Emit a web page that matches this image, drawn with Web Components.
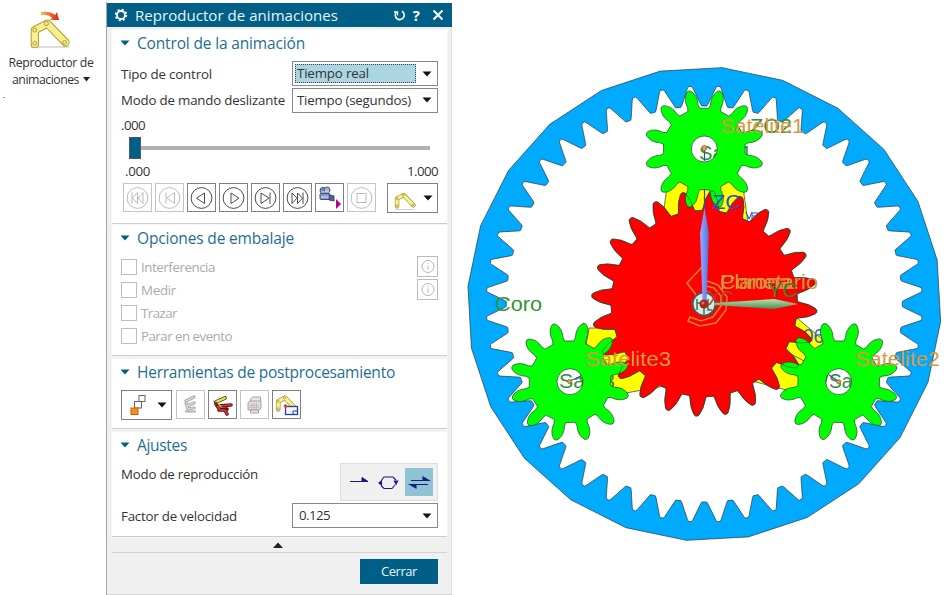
<!DOCTYPE html>
<html lang="es"><head><meta charset="utf-8"><title>Reproductor de animaciones</title>
<style>body{margin:0;background:#fff;font:13.3px/16px "Open Sans","Noto Sans",sans-serif;color:#333;overflow:hidden}</style></head>
<body><app-shell></app-shell>
<script>
const define=(name,html,after)=>customElements.define(name,class extends HTMLElement{
  constructor(){super();this.attachShadow({mode:'open'}).innerHTML=html}
  connectedCallback(){if(after)after(this,this.shadowRoot)}
});

/* Text run spaced to a given width */
define('fit-text','<style>:host{display:inline-block;white-space:nowrap}</style><span><slot></slot></span>',(h,r)=>{
  const s=r.querySelector('span'),n=h.textContent.length;
  s.style.letterSpacing=((+h.getAttribute('w')-s.getBoundingClientRect().width)/n)+'px';
});

/* Icons */
const circ='<circle cx="13.500" cy="14" r="10.4"/>';
const link=(t,s='#a99a2c')=>`<g transform="${t}"><path d="M5 29V14L18 7L37 27" fill="none" stroke="${s}" stroke-width="8.6" stroke-linecap="round" stroke-linejoin="round"/><path d="M5 29V14L18 7L37 27" fill="none" stroke="#f8ef91" stroke-width="6.6" stroke-linecap="round" stroke-linejoin="round"/><g fill="#f6eb83" stroke="${s}"><circle cx="5" cy="28" r="2"/><circle cx="5" cy="14" r="2"/><circle cx="17" cy="7" r="2.2"/><circle cx="36" cy="27" r="2"/></g></g>`;
const icons={
 first:[28,28,`<g fill="none" stroke="currentColor">${circ}<path d="M8 8.500v11M13.500 8.500l-5 5.500 5 5.500zM19 8.500l-5 5.500 5 5.500z"/></g>`],
 prev:[28,28,`<g fill="none" stroke="currentColor">${circ}<path d="M10 8.500v11M18.500 8.500l-7.500 5.500 7.500 5.500z"/></g>`],
 back:[28,28,`<g fill="none" stroke="currentColor">${circ}<path d="M16.500 9v10.500l-8-5.300z"/></g>`],
 play:[28,28,`<g fill="none" stroke="currentColor">${circ}<path d="M11 9v10.500l8-5.300z"/></g>`],
 next:[28,28,`<g fill="none" stroke="currentColor">${circ}<path d="M9 9v10.500l8-5.300zM18 8.500v11.500"/></g>`],
 last:[28,28,`<g fill="none" stroke="currentColor">${circ}<path d="M8 9v10.500l5-5.300zM13.500 9v10.500l5-5.300zM19 8.500v11.500"/></g>`],
 stop:[28,28,`<g fill="none" stroke="currentColor">${circ}<rect x="9" y="9.5" width="9" height="9"/></g>`],
 camera:[28,28,`<g stroke="#34406f" stroke-width=".9"><circle cx="7" cy="6.500" r="3" fill="#7d8cb5"/><circle cx="11" cy="6" r="3" fill="#aab5d3"/><rect x="4" y="9.500" width="10" height="6" rx="1" fill="#8798c4"/><path d="M13 11l5 1v5l-5-1z" fill="#49629f"/></g><path d="M5 8h8M5 13h8" stroke="#dce5fa"/><path d="M20 15v10l5-5z" fill="#b0009c"/>`],
 linkSmall:[22,18,link('translate(.5 -.5) scale(.51)','#8b7b19')+'<path d="M1 17.5h19" stroke="#bbb" stroke-width=".7"/>'],
 info:[20,20,`<circle cx="10" cy="9.5" r="6" fill="none" stroke="#b6b6b6"/><path d="M10 8.500v4.500M10 6v1.200" stroke="#b6b6b6"/>`],
 steps:[20,22,`<rect x="9" y="1.500" width="6" height="6" fill="#fff" stroke="#666"/><rect x="4.500" y="7.500" width="7" height="6.500" fill="#fff" stroke="#666"/><rect x="1" y="14" width="7" height="6.5" fill="#ff8c19" stroke="#b9650c"/>`],
 robotGray:[28,28,`<g fill="none" stroke-linecap="round" stroke-linejoin="round"><path d="M9 10l8-4M9 12l2 6M10 15l7-3M11 18l6-1" stroke="#a3a3a3" stroke-width="3.200"/><path d="M9 10l8-4M9 12l2 6M10 15l7-3M11 18l6-1" stroke="#dad6d4" stroke-width="1.400"/></g><path d="M8 20.500h11" stroke="#b4b0ae" stroke-width="2"/>`],
 robot:[28,28,`<g fill="none" stroke-linecap="round" stroke-linejoin="round"><path d="M7 11l9-4" stroke="#514a12" stroke-width="3.800"/><path d="M7 11l9-4" stroke="#eee25a" stroke-width="2"/><path d="M7 13l4 6h5l2 4M10 15l12-1M10 19l8-1" stroke="#5d1010" stroke-width="3.600"/><path d="M7 13l4 6h5l2 4M10 15l12-1" stroke="#d83a35" stroke-width="1.700"/><path d="M5 10l3 4M7 14.500l5-1" stroke="#333"/><path d="M9 12l3 4" stroke="#eee25a" stroke-width="1.200"/></g>`],
 cubeGray:[28,28,`<g fill="#e4e4ea" stroke="#a4a4ae"><path d="M9.500 8l2-2h8v7l-2 2h-8z"/><path d="M7 12l2-2h11v7l-2 2H7z" fill="#e3dcd6"/><path d="M9.500 19h8v3h-8z"/><path d="M8 14.500h10M8 16.500h10M10.500 12v7M13 12v7M15.500 12v7" stroke="#c0b2a6" stroke-width=".7"/></g>`],
 linkBox:[28,28,link('translate(2.500 3) scale(.53)','#8b7b19')+`<rect x="12.5" y="15.5" width="12" height="8" fill="#f4f6ff" stroke="#2b3e9c" stroke-width="1.3"/><path d="M20 23v-3h4" fill="none" stroke="#2b3e9c"/><circle cx="12.500" cy="15" r="1.8" fill="#e2402b"/>`],
 once:[28,28,`<path d="M5 13.500h18l-6-4v4" fill="#1717a0" stroke="#1b1b78" stroke-width="1"/>`],
 loop:[28,28,`<path d="M6 13l3-4h9l3 3M20 17l-3 3.500H9l-3-3" fill="none" stroke="#1b1b78" stroke-width="1.100"/><path d="M18.500 12.500h5l-2.500 5zM3 15l4-3v6z" fill="#1515b0"/>`],
 both:[28,28,`<path d="M6 12.500h18l-6-3.500v3.500M23 16.500H5l6 3.500v-3.500" fill="#1515a0" stroke="#1b1b78" stroke-width="1.1"/>`],
 gear:[16,16,`<circle cx="8" cy="8" r="4" fill="none" stroke="#fff" stroke-width="1.8"/><circle cx="8" cy="8" r="5.400" fill="none" stroke="#fff" stroke-width="1.700" stroke-dasharray="2.120 2.120"/>`],
 reset:[14,14,`<path d="M3.500 4a4.500 4.500 0 1 0 5.500-.800" fill="none" stroke="#fff" stroke-width="1.600"/><path d="M1 4h3.500v3.500" fill="none" stroke="#fff" stroke-width="1.300"/>`],
 close:[12,12,`<path d="M1.500 1.500l9 9M10.500 1.500l-9 9" stroke="#fff" stroke-width="2"/>`],
 down:[10,6,`<path d="M.5.5h9L5 5.500z" fill="currentColor"/>`],
 up:[10,6,`<path d="M0 6h10L5 .5z" fill="#222"/>`]
};
define('ui-icon','<style>:host{display:inline-block;flex:none;line-height:0}svg{display:block}</style><div></div>',(h,r)=>{
  const [w,t,b]=icons[h.getAttribute('name')];
  r.querySelector('div').innerHTML=`<svg width="${w}" height="${t}" viewBox="0 0 ${w} ${t}">${b}</svg>`;
});
define('tool-button',`<style>:host{display:flex;box-sizing:border-box;width:29px;height:29px;border:1px solid #808080;align-items:center;justify-content:center;color:#4a4a4a;background:#fff;flex:none}:host([off]){border-color:#c4c4c4;color:#bbb}:host([wide]){width:51px;height:30px;justify-content:space-between;padding:0 4px 0 6px;color:#111}:host([info]){width:21px;height:21px;border-color:#bbb}</style><slot></slot>`);
define('combo-box',`<style>:host{display:flex;box-sizing:border-box;width:146px;height:25px;border:1px solid #888;align-items:center;background:#fff;color:#333;padding:0 5px 0 2px;justify-content:space-between}.v{height:19px;box-sizing:border-box;width:121px;border:1px solid transparent;padding-left:1px;line-height:16px}:host([active]) .v{background:#abd5e0;border:1px dotted #345}ui-icon{color:#111}</style><div class="v"><slot></slot></div><ui-icon name="down"></ui-icon>`);
define('panel-section',`<style>:host{display:block;background:#fff;box-sizing:border-box;padding:0 9px 0 9px;border-bottom:1px solid #ccc;box-shadow:0 0 0 .5px #f8f8f8}header{display:flex;align-items:center;gap:7px;height:26px;color:#1d6f91;font-size:15.500px;line-height:20px;margin:0 0 1px -1px}ui-icon{color:#005f87}</style><header><ui-icon name="down"></ui-icon><slot name="title"></slot></header><slot></slot>`);
define('check-row',`<style>:host{display:flex;align-items:center;height:23.200px;color:#aaa;gap:4px}i{width:16px;height:16px;box-sizing:border-box;border:1px solid #bdbdbd}tool-button{margin-left:auto;display:none}:host([info]) tool-button{display:flex}</style><i></i><slot></slot><tool-button info><ui-icon name="info"></ui-icon></tool-button>`);
define('form-row',`<style>:host{display:flex;justify-content:space-between;align-items:center}</style><slot></slot>`);
define('time-slider',`<style>:host{display:block;height:22px;margin:0 8px}div{display:flex;align-items:center;height:22px}b{width:12px;height:22px;background:#005f87;border:1px solid #557;box-sizing:border-box}i{height:4px;flex:1;background:#b0b0b0}</style><div><b></b><i></i></div>`);
define('launch-item',`<style>:host{display:flex;flex-direction:column;align-items:center;width:102px;padding-top:10px;height:585px;font-size:12.300px;line-height:17px}.p{height:43.500px}.p svg{margin-left:-2px}.t{display:flex;align-items:center;gap:4px}.d{align-self:flex-start;width:2px;height:1px;background:#6ab;margin:9px 0 0 3px}</style>
<div class="p"><svg width="44" height="42" viewBox="0 0 44 42"><defs><linearGradient id="g"><stop stop-color="#f9b44e"/><stop offset="1" stop-color="#e1240e"/></linearGradient></defs><path d="M3 37h38" stroke="#bbb"/>${link('translate(2 7) scale(.96 .94)')}<path d="M13 2q9-1 14 3l2-3 2 8-9 0 2-2q-4-4-11-3z" fill="url(#g)"/></svg></div>
<fit-text w="85">Reproductor de</fit-text><div class="t"><fit-text w="67">animaciones</fit-text><svg width="7" height="5"><path d="M0 0h7L3.500 4.500z" fill="#222"/></svg></div><div class="d"></div>`);

define('animation-dialog',`<style>
:host{display:flex;flex-direction:column;box-sizing:border-box;width:346px;height:595px;border-left:1px solid #a7a7a7;background:#f0f0f0;border-top:3px solid #fff;box-shadow:inset -1px 0 #e1e1e1}
.bar{height:24px;background:#005f87;color:#fff;display:flex;align-items:center;padding:0 8px 0 6px;font-size:15px;line-height:22px;margin-bottom:3px}
.bar fit-text{margin-left:6px;color:#e9f4f8}.bar .r{margin-left:auto;display:flex;align-items:center;gap:8px}.bar b{font-size:15px;margin-left:-2px}
panel-section{margin:0 5px}
.tools{display:flex;gap:3px}.modes{box-sizing:border-box;width:98px;height:38px;border:1px solid #ddd;background:#f0f0f0;display:flex;align-items:center;justify-content:flex-end;padding-right:4px;gap:2px}
.sel{background:#8dc3d3}
.fold{height:15px;display:flex;justify-content:center;align-items:center;border-bottom:1px solid #d4d4d4;margin:0 5px;padding-right:3px}
button{align-self:flex-end;margin:6px 14px 0 0;width:78px;height:25px;border:0;background:#005f87;color:#e8f4f8;font:13px/16px "Open Sans",sans-serif;padding:0 0 1px}
.end{margin-top:auto;height:1px;background:#d6d6d6}
</style>
<div class="bar"><ui-icon name="gear"></ui-icon><fit-text w="203">Reproductor de animaciones</fit-text><div class="r"><ui-icon name="reset" style="margin-right:0"></ui-icon><b>?</b><ui-icon name="close" style="margin-left:4px"></ui-icon></div></div>
<panel-section style="height:194px"><fit-text slot="title" w="168">Control de la animación</fit-text>
 <form-row style="margin-top:5px;height:25px"><fit-text w="91">Tipo de control</fit-text><combo-box active><fit-text w="72">Tiempo real</fit-text></combo-box></form-row>
 <form-row style="margin-top:1px;height:26px"><fit-text w="164">Modo de mando deslizante</fit-text><combo-box><fit-text w="114">Tiempo (segundos)</fit-text></combo-box></form-row>
 <form-row style="margin-top:3px;height:18px"><fit-text w="24">.000</fit-text></form-row>
 <time-slider style="margin-top:3px"></time-slider>
 <form-row style="margin:3px 0 0 4px;height:18px"><fit-text w="25">.000</fit-text><fit-text w="31">1.000</fit-text></form-row>
 <form-row style="margin:3px 0 0 2px;height:31px;align-items:flex-start"><div class="tools"><tool-button off><ui-icon name="first"></ui-icon></tool-button><tool-button off><ui-icon name="prev"></ui-icon></tool-button><tool-button><ui-icon name="back"></ui-icon></tool-button><tool-button><ui-icon name="play"></ui-icon></tool-button><tool-button><ui-icon name="next"></ui-icon></tool-button><tool-button><ui-icon name="last"></ui-icon></tool-button><tool-button><ui-icon name="camera"></ui-icon></tool-button><tool-button off><ui-icon name="stop"></ui-icon></tool-button></div><tool-button wide><ui-icon name="linkSmall" style="margin-top:6px"></ui-icon><ui-icon name="down"></ui-icon></tool-button></form-row>
</panel-section>
<panel-section style="height:131px;margin-top:1px"><fit-text slot="title" w="157">Opciones de embalaje</fit-text>
 <check-row info style="margin-top:4px"><fit-text w="74">Interferencia</fit-text></check-row><check-row info><fit-text w="35">Medir</fit-text></check-row><check-row><fit-text w="36">Trazar</fit-text></check-row><check-row><fit-text w="91">Parar en evento</fit-text></check-row>
</panel-section>
<panel-section style="height:70px;margin-top:3px"><fit-text slot="title" w="258">Herramientas de postprocesamiento</fit-text>
 <div class="tools" style="margin-top:5px"><tool-button wide style="margin-right:1px"><ui-icon name="steps" style="margin-left:2px"></ui-icon><ui-icon name="down"></ui-icon></tool-button><tool-button off><ui-icon name="robotGray"></ui-icon></tool-button><tool-button><ui-icon name="robot"></ui-icon></tool-button><tool-button off><ui-icon name="cubeGray"></ui-icon></tool-button><tool-button><ui-icon name="linkBox"></ui-icon></tool-button></div>
</panel-section>
<panel-section style="height:105px;margin-top:3px"><fit-text slot="title" w="50">Ajustes</fit-text>
 <form-row style="margin-top:5px;height:38px;align-items:flex-start"><fit-text w="137" style="margin-top:3px">Modo de reproducción</fit-text><div class="modes"><ui-icon name="once"></ui-icon><ui-icon name="loop"></ui-icon><ui-icon class="sel" name="both"></ui-icon></div></form-row>
 <form-row style="margin-top:2px;height:25px"><fit-text w="116">Factor de velocidad</fit-text><combo-box><fit-text w="31" style="margin-left:2px">0.125</fit-text></combo-box></form-row>
</panel-section>
<div class="fold"><ui-icon name="up"></ui-icon></div>
<button><fit-text w="36">Cerrar</fit-text></button><div class="end"></div>`);

/* Planetary gear drawing */
const pt=(r,a)=>{a*=Math.PI/180;return (r*Math.cos(a)).toFixed(2)+' '+(r*Math.sin(a)).toFixed(2)};
const ring=()=>{let d='';
  for(let i=0;i<24;i++)d+=(i?'L':'M')+pt(237,4.3+15*i);d+='Z';
  for(let i=0;i<48;i++){const a=7.5*i;d+=(i?'L':'M')+pt(199.500,a-1)+'L'+pt(198,a-.7)+'L'+pt(198,a+.7)+'L'+pt(199.500,a+1)+'L'+pt(216.300,a+3.050)+'L'+pt(218,a+3.350)+'L'+pt(218,a+4.150)+'L'+pt(216.300,a+4.450)+'L'+pt(199.500,a+6.500)}
  return d+'Z'};
const sun=()=>{let d='';
  for(let i=0;i<24;i++){const a=4+15*i;d+=(i?'L':'M')+pt(93.200,a-5.200)+'L'+pt(96,a-4.600)+'Q'+pt(105,a-3.700)+' '+pt(111.600,a-1.300)+'L'+pt(112.700,a-.6)+'L'+pt(112.700,a+.6)+'L'+pt(111.600,a+1.300)+'Q'+pt(105,a+3.700)+' '+pt(96,a+4.600)+'L'+pt(93.200,a+5.200)}
  return d+'Z'};
const sat=()=>{let d='';
  for(let i=0;i<12;i++){const a=15+30*i;d+=(i?'L':'M')+pt(41,a-8.500)+'L'+pt(44.500,a-7)+'Q'+pt(54,a-7.900)+' '+pt(59.300,a-2)+'Q'+pt(60.800,a)+' '+pt(59.300,a+2)+'Q'+pt(54,a+7.900)+' '+pt(44.500,a+7)+'L'+pt(41,a+8.500)}
  return d+'ZM13 0A13 13 0 1 0-13 0A13 13 0 1 0 13 0Z'};
const T=(x,y,w,c,s)=>`<text x="${x}" y="${y}" textLength="${w}" lengthAdjust="spacingAndGlyphs" fill="${c}">${s}</text>`;
const O='#d8983f',G='#2f9435',B='#2b50b8';
define('gear-view',`<style>:host{display:block;width:494px;height:595px}svg{display:block}text{font:20.500px "Liberation Sans",Arial,sans-serif}</style>
<svg width="494" height="595" viewBox="452 0 494 595"><g stroke="#2a3a34" stroke-width=".7">
<path transform="translate(704.300 304)" fill="#00aaff" fill-rule="evenodd" d="${ring()}"/>
<g fill="#ff0"><path d="M668 180L661 230H749L742 180Z"/><path d="M589 328L640 328L670 385L615 395L580 380Z"/><path d="M790 317L797 318L835 350L825 385L798 393L752 381Z"/></g></g>
${T(803,343,21,'#3a68ac','06')}<path d="M789 353l15 8" stroke="#3a68ac"/>
${T(750,133,42,G,'ZO2')}${T(699,160,53,G,'Sate1')}${T(559,388,56,G,'Sate3')}${T(829,388,50,G,'Sate2')}
<g stroke="#23422a" stroke-width=".7"><path transform="translate(704.300 303.500)" fill="#f00" d="${sun()}"/>
<g fill="#0f0" fill-rule="evenodd"><path transform="translate(704.300 149)" d="${sat()}"/><path transform="translate(570 381.700) rotate(-1)" d="${sat()}"/><path transform="translate(838.700 381.700) rotate(.8)" d="${sat()}"/></g>
<path transform="translate(704.300 303.500)" fill="none" stroke-width=".5" d="${sun()}"/></g>
<g fill="none" stroke="#e0822a" stroke-width="1.600"><path d="M702 267L687 283L697 296M707 281L718 285L727 297L726 310L716 323L700 326L688 321L690 317L701 321L713 317L721 306L721 296L714 288L706 286M706 291L713 296L716 302"/></g>
<g fill="none" stroke="${B}" stroke-width="1.200"><path d="M704.500 149V161M704.500 189V212M570 381l11-5M838 381l-9-6"/></g>
<g fill="#d7a45b" stroke="#a76a32"><circle cx="704.300" cy="148" r="2.500"/><circle cx="569.500" cy="381.500" r="2"/><circle cx="838.700" cy="381.700" r="2"/></g>
<circle cx="704" cy="304" r="11.500" fill="#dce9df" stroke="#555" stroke-width="2"/><path d="M697 299v11M697 303h5M708 299v11h4M704 308v6" fill="none" stroke="#24835d" stroke-width="1.500"/>
${T(708,305,26,'#c0392f','XC')}
<defs><linearGradient id="b"><stop stop-color="#9aa9ff"/><stop offset=".6" stop-color="#7089f2"/><stop offset="1" stop-color="#5867bb"/></linearGradient><linearGradient id="v" x2="0" y2="1"><stop stop-color="#b5e8b0"/><stop offset="1" stop-color="#4f8955"/></linearGradient></defs>
<path d="M704.500 208L709 233L706.500 301H702.500L700 233Z" fill="url(#b)"/><path d="M798 304L774 299L714 303V305L774 309Z" fill="url(#v)"/>
<circle cx="704" cy="304" r="4.500" fill="#a72727"/><circle cx="703" cy="303" r="1.500" fill="#e46d5b"/>
${T(495,311,47,G,'Coro')}${T(720,289,71,O,'Corona')}${T(720,289,98,O,'Planetario')}${T(768,297,30,'#35812c','YC')}${T(712,209,29,'#264fd6','ZC')}
<path d="M746 212l3 7 3-7M752 219v-6h6M752 216h4M726 215l3-2" fill="none" stroke="${B}"/>
${T(720,133,84,O,'Satelite1')}${T(585,366,86,O,'Satelite3')}${T(855,366,85,O,'Satelite2')}
</svg>`);
define('app-shell','<style>:host{display:flex;width:946px;height:595px}launch-item{margin-right:4px;flex:none}animation-dialog,gear-view{flex:none}</style><launch-item></launch-item><animation-dialog></animation-dialog><gear-view></gear-view>');
</script></body></html>
